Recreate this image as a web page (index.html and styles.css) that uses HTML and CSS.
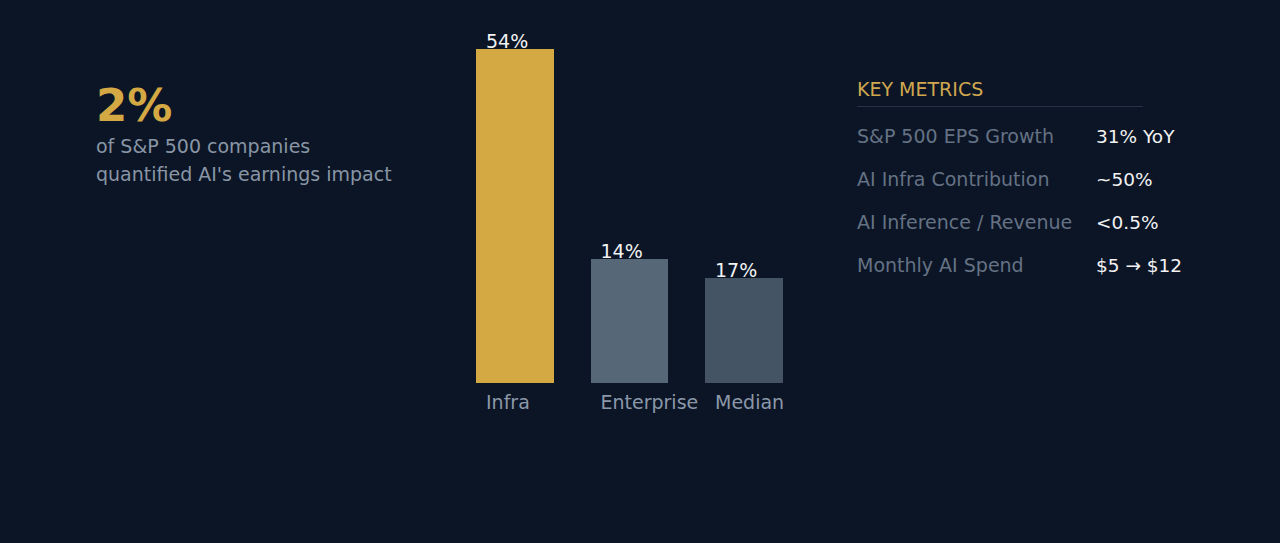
FILE: index.html
```html
<!DOCTYPE html>
<html lang="en">
<head>
<meta charset="utf-8">
<title>AI earnings impact</title>
<link rel="stylesheet" href="styles.css">
</head>
<body>
<main class="page">
  <section class="headline">
    <div class="big">2%</div>
    <p class="sub">of S&amp;P 500 companies<br>quantified AI's earnings impact</p>
  </section>

  <section class="chart">
    <div class="bars">
      <div class="col">
        <div class="val">54%</div>
        <div class="bar bar-infra" style="height:334px"></div>
      </div>
      <div class="col">
        <div class="val">14%</div>
        <div class="bar bar-ent" style="height:124px"></div>
      </div>
      <div class="col">
        <div class="val">17%</div>
        <div class="bar bar-med" style="height:105px"></div>
      </div>
    </div>
    <div class="cats">
      <div class="cat">Infra</div>
      <div class="cat">Enterprise</div>
      <div class="cat">Median</div>
    </div>
  </section>

  <section class="metrics">
    <h2 class="metrics-title">KEY METRICS</h2>
    <dl class="metric-list">
      <dt>S&amp;P 500 EPS Growth</dt><dd>31% YoY</dd>
      <dt>AI Infra Contribution</dt><dd>~50%</dd>
      <dt>AI Inference / Revenue</dt><dd>&lt;0.5%</dd>
      <dt>Monthly AI Spend</dt><dd>$5 → $12</dd>
    </dl>
  </section>
</main>
</body>
</html>
```

FILE: styles.css
```css
html, body {
  margin: 0;
  padding: 0;
  background: #0b1526;
}

body {
  width: 1280px;
  height: 543px;
  overflow: hidden;
  font-family: "DejaVu Sans", "Liberation Sans", sans-serif;
}

.page {
  display: flex;
  padding-left: 96px;
}

.headline {
  width: 380px;
  padding-top: 83px;
}

.big {
  font-size: 45px;
  line-height: 45px;
  font-weight: bold;
  color: #d4a944;
}

.sub {
  margin: 4px 0 0;
  font-size: 19px;
  line-height: 28px;
  color: #8995a5;
}

.chart {
  width: 381px;
  display: flex;
  flex-direction: column;
}

.bars {
  height: 383px;
  display: flex;
  align-items: flex-end;
  gap: 37px;
}

.col {
  width: 77.5px;
  display: flex;
  flex-direction: column;
}

.val {
  height: 17px;
  line-height: 19px;
  font-size: 19px;
  padding-left: 10px;
  color: #f2f2f2;
  white-space: nowrap;
}

.bar { width: 100%; }
.bar-infra { background: #d4a944; }
.bar-ent { background: #566878; }
.bar-med { background: #445465; }

.cats {
  display: flex;
  gap: 37px;
  margin-top: 10px;
}

.cat {
  width: 67.5px;
  padding-left: 10px;
  font-size: 19px;
  line-height: 19px;
  color: #8c98a9;
  white-space: nowrap;
}

.metrics {
  width: 286px;
  padding-top: 77px;
}

.metrics-title {
  margin: 0;
  font-size: 19px;
  line-height: 24px;
  font-weight: normal;
  color: #d0a74f;
  padding-bottom: 5px;
  border-bottom: 1px solid #263244;
}

.metric-list {
  margin: 8px 0 0;
  display: grid;
  grid-template-columns: 239px auto;
  align-items: baseline;
}

.metric-list dt {
  font-size: 19px;
  line-height: 43px;
  color: #657284;
  white-space: nowrap;
}

.metric-list dd {
  margin: 0;
  font-size: 18.5px;
  line-height: 43px;
  color: #f2f2f2;
  white-space: nowrap;
}
```
